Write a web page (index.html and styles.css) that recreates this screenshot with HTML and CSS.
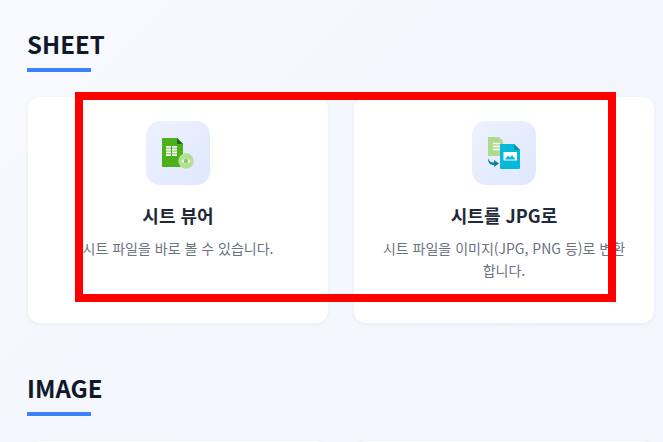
FILE: index.html
```html
<!DOCTYPE html>
<html lang="ko">
<head>
<meta charset="utf-8">
<title>SHEET</title>
<link rel="stylesheet" href="styles.css">
</head>
<body>
<main class="page">
  <section class="section">
    <h2 class="section-title">SHEET</h2>
    <div class="cards">
      <article class="card">
        <div class="icon-box">
          <svg width="32" height="32" viewBox="0 0 32 32" aria-hidden="true">
            <path d="M0 1H15L21 7V29Q21 30 20 30H1Q0 30 0 29Z" fill="#4cb01a"/>
            <path d="M15 1L21 7H15Z" fill="#1f6b12"/>
            <path d="M4 9H15V19H4Z" fill="#fff"/>
            <path d="M4 11.200H15M4 14H15M4 16.800H15" stroke="#4cb01a" stroke-width="0.800"/>
            <path d="M9.500 9V19" stroke="#4cb01a" stroke-width="1"/>
            <circle cx="24" cy="24" r="7.700" fill="#b2e091"/>
            <path d="M19 24Q24 19 29 24Q24 29 19 24Z" fill="#e8f6dc"/>
            <circle cx="24" cy="24" r="2.200" fill="#8cc76c"/>
          </svg>
        </div>
        <h3 class="card-title">시트 뷰어</h3>
        <p class="card-text">시트 파일을 바로 볼 수 있습니다.</p>
      </article>
      <article class="card">
        <div class="icon-box">
          <svg width="32" height="32" viewBox="0 0 32 32" aria-hidden="true">
            <path d="M0 0H11L15 4V19H0Z" fill="#aedb8c"/>
            <path d="M5 6.500H12M5 9.500H12M5 12.500H12" stroke="#fff" stroke-width="1.500"/>
            <path d="M12 7H26L32 13V31Q32 32 31 32H13Q12 32 12 31Z" fill="#04b8da"/>
            <path d="M26 7L32 13H26Z" fill="#0a8fb0"/>
            <path d="M15.500 15H29V23.500H15.500Z" fill="#fff"/>
            <path d="M17 22.500L20 18.500L22 20.500L24 18L27.500 22.500Z" fill="#04b8da"/>
            <path d="M0 21C1 24.500 3 25.500 6 25.500V23L11 26.500L6 30V28C2 28 -0.500 25 0 21Z" fill="#0b7fa0"/>
          </svg>
        </div>
        <h3 class="card-title">시트를 JPG로</h3>
        <p class="card-text">시트 파일을 이미지(JPG, PNG 등)로 변환합니다.</p>
      </article>
    </div>
  </section>
  <section class="section">
    <h2 class="section-title">IMAGE</h2>
    <div class="cards">
      <article class="card card-clipped"></article>
      <article class="card card-clipped"></article>
    </div>
  </section>
</main>
<div class="highlight"></div>
</body>
</html>
```
FILE: styles.css
```css
html, body {
  margin: 0;
  height: 100%;
  overflow: hidden;
}
body {
  background: linear-gradient(135deg, #f8faff 0%, #f4f7fd 45%, #f3f6fd 100%);
  font-family: "Noto Sans CJK KR", "Noto Sans", sans-serif;
  color: #111827;
  position: relative;
}
.page {
  padding: 28px 0 0 28px;
}
.section {
  margin-bottom: 49px;
}
.section-title {
  position: relative;
  margin: 0 0 25px -1px;
  height: 44px;
  font-size: 24px;
  line-height: 32px;
  font-weight: 700;
  color: #111827;
}
.section-title::after {
  content: "";
  position: absolute;
  left: 0;
  bottom: 0;
  width: 64px;
  height: 4px;
  background: #3b82f6;
}
.cards {
  display: grid;
  grid-template-columns: 300px 300px;
  gap: 26px;
}
.card {
  box-sizing: border-box;
  height: 226px;
  padding: 24px 24px 0;
  background: #fff;
  border-radius: 12px;
  box-shadow: 0 1px 4px rgba(30, 50, 90, 0.06);
  text-align: center;
}
.icon-box {
  width: 64px;
  height: 64px;
  margin: 0 auto 16px;
  display: flex;
  align-items: center;
  justify-content: center;
  border-radius: 14px;
  background: linear-gradient(135deg, #edf2fe, #e0e7ff);
}
.card-title {
  margin: 0 0 8px;
  font-size: 18px;
  line-height: 28px;
  font-weight: 700;
  color: #1f2937;
}
.card-text {
  margin: 0;
  font-size: 14px;
  line-height: 22px;
  color: #6b7280;
}
.highlight {
  position: absolute;
  left: 75px;
  top: 92px;
  width: 541px;
  height: 210px;
  box-sizing: border-box;
  border: 8px solid #ff0000;
}
```
